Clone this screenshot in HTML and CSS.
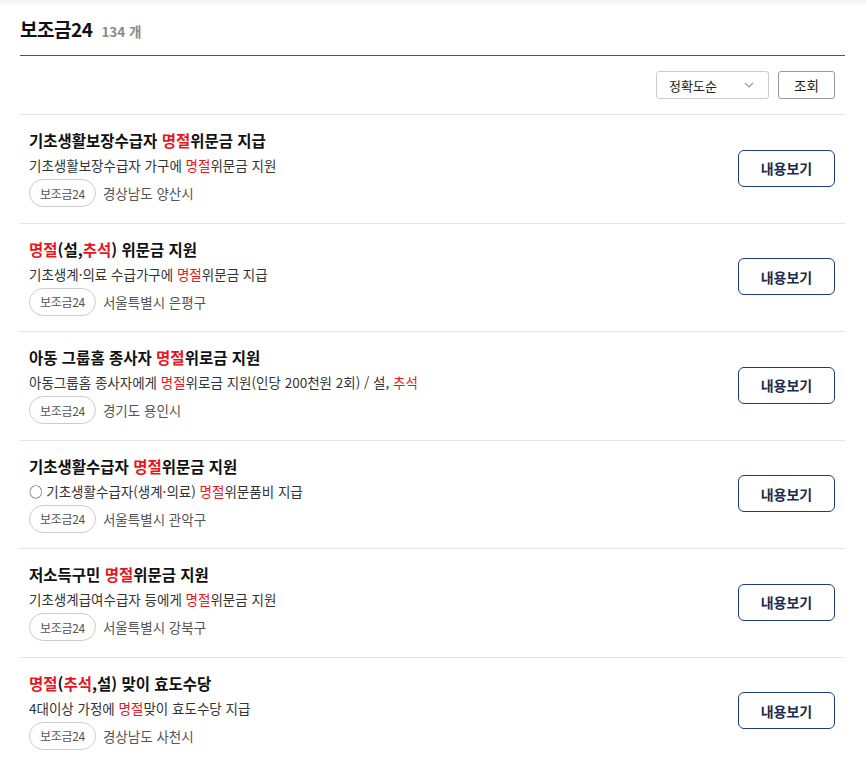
FILE: index.html
```html
<!DOCTYPE html>
<html lang="ko">
<head>
<meta charset="utf-8">
<link rel="stylesheet" href="styles.css">
</head>
<body>
<div class="topshade"></div>
<div class="wrap">
  <div class="head">
    <h2 class="title">보조금24</h2>
    <span class="count">134 개</span>
  </div>
  <div class="toolbar">
    <div class="select">
      <span>정확도순</span>
      <svg class="chev" width="10" height="6" viewBox="0 0 10 6"><path d="M1 1l4 4 4-4" fill="none" stroke="#999" stroke-width="1.2"/></svg>
    </div>
    <button class="search">조회</button>
  </div>
  <ul class="list">
    <li class="item">
      <div class="info">
        <p class="ititle">기초생활보장수급자 <em>명절</em>위문금 지급</p>
        <p class="desc">기초생활보장수급자 가구에 <em>명절</em>위문금 지원</p>
        <div class="meta"><span class="tag">보조금24</span><span class="loc">경상남도 양산시</span></div>
      </div>
      <button class="view">내용보기</button>
    </li>
    <li class="item">
      <div class="info">
        <p class="ititle"><em>명절</em>(설,<em>추석</em>) 위문금 지원</p>
        <p class="desc">기초생계·의료 수급가구에 <em>명절</em>위문금 지급</p>
        <div class="meta"><span class="tag">보조금24</span><span class="loc">서울특별시 은평구</span></div>
      </div>
      <button class="view">내용보기</button>
    </li>
    <li class="item">
      <div class="info">
        <p class="ititle">아동 그룹홈 종사자 <em>명절</em>위로금 지원</p>
        <p class="desc">아동그룹홈 종사자에게 <em>명절</em>위로금 지원(인당 200천원 2회) / 설, <em>추석</em></p>
        <div class="meta"><span class="tag">보조금24</span><span class="loc">경기도 용인시</span></div>
      </div>
      <button class="view">내용보기</button>
    </li>
    <li class="item">
      <div class="info">
        <p class="ititle">기초생활수급자 <em>명절</em>위문금 지원</p>
        <p class="desc">○ 기초생활수급자(생계·의료) <em>명절</em>위문품비 지급</p>
        <div class="meta"><span class="tag">보조금24</span><span class="loc">서울특별시 관악구</span></div>
      </div>
      <button class="view">내용보기</button>
    </li>
    <li class="item">
      <div class="info">
        <p class="ititle">저소득구민 <em>명절</em>위문금 지원</p>
        <p class="desc">기초생계급여수급자 등에게 <em>명절</em>위문금 지원</p>
        <div class="meta"><span class="tag">보조금24</span><span class="loc">서울특별시 강북구</span></div>
      </div>
      <button class="view">내용보기</button>
    </li>
    <li class="item">
      <div class="info">
        <p class="ititle"><em>명절</em>(<em>추석</em>,설) 맞이 효도수당</p>
        <p class="desc">4대이상 가정에 <em>명절</em>맞이 효도수당 지급</p>
        <div class="meta"><span class="tag">보조금24</span><span class="loc">경상남도 사천시</span></div>
      </div>
      <button class="view">내용보기</button>
    </li>
  </ul>
</div>
</body>
</html>
```

FILE: styles.css
```css
* { box-sizing: border-box; }
html, body { margin: 0; padding: 0; background: #fff; }
body {
  font-family: "Noto Sans CJK KR", "Noto Sans", sans-serif;
  color: #222;
  position: relative;
}
.topshade {
  position: absolute;
  left: 0; right: 0; top: 0;
  height: 6px;
  background: linear-gradient(to bottom, rgba(0,0,0,0.06), rgba(0,0,0,0));
}
.wrap { padding: 0 21px 0 20px; }
.head {
  display: flex;
  align-items: baseline;
  gap: 9px;
  padding-top: 16px;
  padding-bottom: 13px;
  border-bottom: 1px solid #555;
}
.title {
  margin: 0;
  font-size: 19px;
  line-height: 26px;
  font-weight: 700;
  color: #111;
  letter-spacing: -0.5px;
}
.count {
  font-size: 13.5px;
  font-weight: 700;
  color: #888;
}
.toolbar {
  display: flex;
  justify-content: flex-end;
  gap: 9px;
  padding: 15px 10px 15px 0;
  border-bottom: 1px solid #e5e5e5;
}
.select {
  width: 113px;
  height: 28px;
  border: 1px solid #ccc;
  border-radius: 3px;
  display: flex;
  align-items: center;
  justify-content: space-between;
  padding: 0 14px 0 12px;
  font-size: 13px;
  color: #222;
}
.chev { display: block; }
.search {
  width: 57px;
  height: 28px;
  border: 1px solid #999;
  border-radius: 3px;
  background: #fff;
  font-family: inherit;
  font-size: 13.5px;
  color: #222;
  padding: 0;
}
.list { list-style: none; margin: 0; padding: 0; }
.item {
  display: flex;
  align-items: center;
  justify-content: space-between;
  padding: 14px 10px 15.6px 9px;
  border-bottom: 1px solid #e5e5e5;
}
.item:last-child { border-bottom: none; }
.info { display: flex; flex-direction: column; }
.ititle {
  margin: 0;
  font-size: 15.5px;
  line-height: 22px;
  font-weight: 700;
  color: #111;
}
.desc {
  margin: 4px 0 0;
  font-size: 13.5px;
  line-height: 20px;
  color: #333;
}
em { font-style: normal; color: #e8151f; }
.meta {
  margin-top: 4px;
  display: flex;
  align-items: center;
  gap: 7px;
}
.tag {
  height: 28px;
  padding: 0 10px;
  border: 1px solid #ccc;
  border-radius: 14px;
  display: inline-flex;
  align-items: center;
  font-size: 12px;
  color: #555;
  letter-spacing: -0.3px;
}
.loc {
  font-size: 13.5px;
  color: #555;
}
.view {
  width: 97px;
  height: 37px;
  border: 1px solid #1c3d7a;
  border-radius: 6px;
  background: #fff;
  font-family: inherit;
  font-size: 14px;
  font-weight: 700;
  color: #1a2b4c;
  padding: 0;
  flex-shrink: 0;
}
```
